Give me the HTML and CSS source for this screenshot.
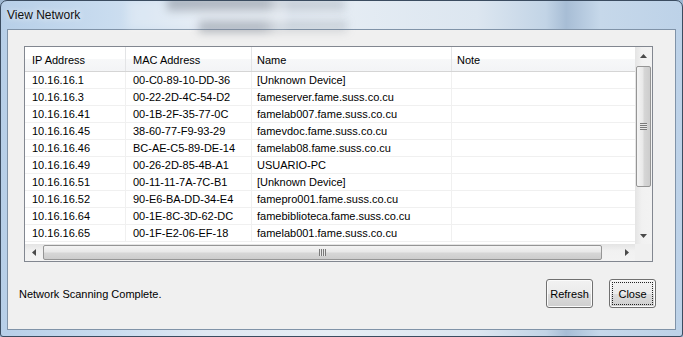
FILE: index.html
```html
<!DOCTYPE html>
<html lang="en">

<head>
  <meta charset="UTF-8">
  <title>View Network</title>
  <link rel="stylesheet" href="styles.css">
</head>

<body>
  <div class="window">
    <!-- glass title bar -->
    <div class="titlebar">
      <span class="glass glass_a"></span>
      <span class="glass glass_b"></span>
      <span class="glass glass_band"></span>
      <span class="title">View Network</span>
    </div>

    <div class="client">
      <div class="listview">
        <div class="lv_main">
          <div class="lv_cols">
            <div class="lv_row lv_head">
              <div class="cell">IP Address</div>
              <div class="cell">MAC Address</div>
              <div class="cell">Name</div>
              <div class="cell">Note</div>
            </div>
            <div class="lv_row"><div class="cell">10.16.16.1</div><div class="cell">00-C0-89-10-DD-36</div><div class="cell">[Unknown Device]</div><div class="cell"></div></div>
            <div class="lv_row"><div class="cell">10.16.16.3</div><div class="cell">00-22-2D-4C-54-D2</div><div class="cell">fameserver.fame.suss.co.cu</div><div class="cell"></div></div>
            <div class="lv_row"><div class="cell">10.16.16.41</div><div class="cell">00-1B-2F-35-77-0C</div><div class="cell">famelab007.fame.suss.co.cu</div><div class="cell"></div></div>
            <div class="lv_row"><div class="cell">10.16.16.45</div><div class="cell">38-60-77-F9-93-29</div><div class="cell">famevdoc.fame.suss.co.cu</div><div class="cell"></div></div>
            <div class="lv_row"><div class="cell">10.16.16.46</div><div class="cell">BC-AE-C5-89-DE-14</div><div class="cell">famelab08.fame.suss.co.cu</div><div class="cell"></div></div>
            <div class="lv_row"><div class="cell">10.16.16.49</div><div class="cell">00-26-2D-85-4B-A1</div><div class="cell">USUARIO-PC</div><div class="cell"></div></div>
            <div class="lv_row"><div class="cell">10.16.16.51</div><div class="cell">00-11-11-7A-7C-B1</div><div class="cell">[Unknown Device]</div><div class="cell"></div></div>
            <div class="lv_row"><div class="cell">10.16.16.52</div><div class="cell">90-E6-BA-DD-34-E4</div><div class="cell">famepro001.fame.suss.co.cu</div><div class="cell"></div></div>
            <div class="lv_row"><div class="cell">10.16.16.64</div><div class="cell">00-1E-8C-3D-62-DC</div><div class="cell">famebiblioteca.fame.suss.co.cu</div><div class="cell"></div></div>
            <div class="lv_row"><div class="cell">10.16.16.65</div><div class="cell">00-1F-E2-06-EF-18</div><div class="cell">famelab001.fame.suss.co.cu</div><div class="cell"></div></div>
          </div>

          <!-- vertical scrollbar -->
          <div class="vscroll">
            <div class="arrow">
              <svg width="7" height="4" viewBox="0 0 7 4"><path d="M0 4 L3.5 0 L7 4 Z" fill="#4a4a4a"/></svg>
            </div>
            <div class="vthumb"><span class="grip_h"></span></div>
            <div class="arrow arrow_end">
              <svg width="7" height="4" viewBox="0 0 7 4"><path d="M0 0 L3.5 4 L7 0 Z" fill="#4a4a4a"/></svg>
            </div>
          </div>
        </div>

        <div class="lv_bottom">
          <!-- horizontal scrollbar -->
          <div class="hscroll">
            <div class="arrow">
              <svg width="4" height="7" viewBox="0 0 4 7"><path d="M4 0 L0 3.5 L4 7 Z" fill="#4a4a4a"/></svg>
            </div>
            <div class="hthumb"><span class="grip_v"></span></div>
            <div class="arrow arrow_end">
              <svg width="4" height="7" viewBox="0 0 4 7"><path d="M0 0 L4 3.5 L0 7 Z" fill="#4a4a4a"/></svg>
            </div>
          </div>
          <div class="corner"></div>
        </div>
      </div>

      <div class="footer">
        <span class="status">Network Scanning Complete.</span>
        <button class="btn">Refresh</button>
        <button class="btn btn_default"><span class="focus">Close</span></button>
      </div>
    </div>
  </div>
</body>

</html>
```

FILE: styles.css
```css
* {
  box-sizing: border-box;
  margin: 0;
  padding: 0;
}

body {
  width: 683px;
  height: 337px;
  overflow: hidden;
  background-color: #9fb8d2;
  font-family: "Liberation Sans", Arial, sans-serif;
  font-size: 11px;
  color: #000;
}

.window {
  display: flex;
  flex-direction: column;
  width: 683px;
  height: 337px;
  padding: 0 6px 6px 6px;
  border: 1px solid #3b4c60;
  border-radius: 7px 7px 3px 3px;
  background: linear-gradient(90deg, #b7cfe8 0, #c9dcef 16%, #dfe8f2 30%, #e6edf4 48%, #dce6f0 70%, #c2d4e6 80%, #a7bdd5 83%, #c6d8ea 88%, #bdd2e8 100%);
  overflow: hidden;
}

/* title */
.titlebar {
  position: relative;
  display: flex;
  align-items: center;
  height: 28px;
  flex-shrink: 0;
}

.title {
  position: relative;
  font-size: 12px;
  color: #111;
  text-shadow: 0 0 6px rgba(255, 255, 255, 0.9);
}

.glass {
  position: absolute;
  filter: blur(4px);
}

.glass_a {
  left: 160px;
  top: -3px;
  width: 178px;
  height: 13px;
  background: linear-gradient(90deg, rgba(75, 85, 100, 0.45) 0, rgba(75, 85, 100, 0.45) 56%, rgba(100, 110, 125, 0.22) 62%, rgba(100, 110, 125, 0.22) 100%);
}

.glass_b {
  left: 192px;
  top: 19px;
  width: 148px;
  height: 12px;
  background: linear-gradient(90deg, rgba(75, 85, 100, 0.42) 0, rgba(75, 85, 100, 0.42) 44%, rgba(100, 110, 125, 0.2) 52%, rgba(100, 110, 125, 0.2) 100%);
}

.glass_band {
  left: 120px;
  top: 0;
  width: 160px;
  height: 28px;
  background: rgba(255, 255, 255, 0.25);
}

/* client area */
.client {
  display: flex;
  flex-direction: column;
  flex: 1;
  padding: 16px 19px 0 11px;
  border: 1px solid #8093a8;
  background-color: #f0f0f0;
}

.listview {
  display: flex;
  flex-direction: column;
  width: 629px;
  height: 216px;
  margin-left: 5px;
  border: 1px solid #828790;
  background-color: #fff;
}

.lv_main {
  display: flex;
  height: 197px;
}

.lv_cols {
  flex: 1;
  overflow: hidden;
}

.lv_row {
  display: grid;
  grid-template-columns: 101px 126px 200px 183px;
  height: 17px;
  border-bottom: 1px solid #f0f0f0;
}

.lv_row .cell {
  display: flex;
  align-items: center;
  padding-left: 7px;
  border-right: 1px solid #f0f0f0;
  white-space: nowrap;
}

.lv_row .cell:nth-child(3),
.lv_row .cell:nth-child(4) {
  padding-left: 5px;
}

.lv_row .cell:last-child {
  border-right: none;
}

.lv_head {
  height: 25px;
  border-bottom: 1px solid #d5d5d5;
  background: linear-gradient(#ffffff 0, #ffffff 50%, #f7f8f9 51%, #f3f4f6 100%);
}

.lv_head .cell {
  padding-top: 1px;
  border-right: 1px solid #e3e4e6;
}

.lv_head .cell:last-child {
  border-right: none;
}

/* scrollbars */
.vscroll {
  display: flex;
  flex-direction: column;
  width: 17px;
  background: linear-gradient(90deg, #e4e4e4 0, #f1f1f1 40%, #f3f3f3 100%);
}

.arrow {
  display: flex;
  align-items: center;
  justify-content: center;
  width: 17px;
  height: 17px;
  flex-shrink: 0;
}

.vscroll .arrow_end {
  margin-top: auto;
}

.vthumb {
  display: flex;
  align-items: center;
  justify-content: center;
  height: 121px;
  margin: 2px 1px 0 1px;
  border: 1px solid #959595;
  border-radius: 2px;
  background: linear-gradient(90deg, #f4f4f4 0, #e8e8e8 45%, #d6d6d6 55%, #cdcdcd 100%);
}

.grip_h {
  width: 7px;
  height: 7px;
  background: repeating-linear-gradient(#7a7a7a 0, #7a7a7a 1px, #e8e8e8 1px, #e8e8e8 2px);
}

.lv_bottom {
  display: flex;
  height: 17px;
}

.hscroll {
  display: flex;
  flex: 1;
  background: linear-gradient(#e4e4e4 0, #f1f1f1 40%, #f3f3f3 100%);
}

.hscroll .arrow_end {
  margin-left: auto;
}

.hthumb {
  display: flex;
  align-items: center;
  justify-content: center;
  width: 559px;
  margin: 1px 0 1px 1px;
  border: 1px solid #959595;
  border-radius: 2px;
  background: linear-gradient(#f4f4f4 0, #e8e8e8 45%, #d6d6d6 55%, #cdcdcd 100%);
}

.grip_v {
  width: 7px;
  height: 7px;
  background: repeating-linear-gradient(90deg, #7a7a7a 0, #7a7a7a 1px, #e8e8e8 1px, #e8e8e8 2px);
}

.corner {
  width: 17px;
  background-color: #f0f0f0;
}

/* footer */
.footer {
  display: flex;
  align-items: center;
  height: 29px;
  margin-top: 17px;
}

.status {
  flex: 1;
}

.btn {
  display: flex;
  align-items: center;
  justify-content: center;
  width: 47px;
  height: 29px;
  border: 1px solid #707070;
  border-radius: 3px;
  background: linear-gradient(#f2f2f2 0, #ebebeb 50%, #dddddd 51%, #cfcfcf 100%);
  font-family: "Liberation Sans", Arial, sans-serif;
  font-size: 11px;
  color: #000;
  box-shadow: inset 0 0 0 1px #fbfbfb;
}

.btn + .btn {
  margin-left: 16px;
}

.btn_default {
  padding: 2px;
}

.focus {
  display: flex;
  align-items: center;
  justify-content: center;
  width: 100%;
  height: 100%;
  border: 1px dotted #222;
}
```
